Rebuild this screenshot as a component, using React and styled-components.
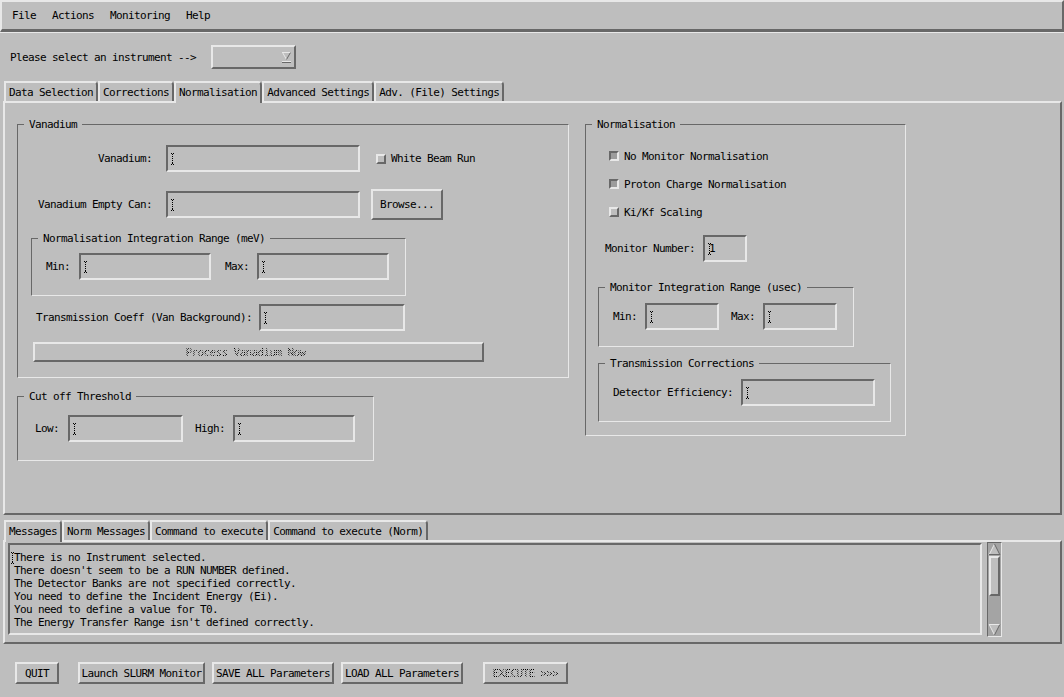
import React from 'react';
import styled, { createGlobalStyle, css } from 'styled-components';

const BG = '#bebebe';
const LIGHT = '#e8e8e8';
const DARK = '#686868';
const TROUGH = '#a4a4a4';

const raised = (w = 2) => css`
  border-style: solid;
  border-width: ${w}px;
  border-color: ${LIGHT} ${DARK} ${DARK} ${LIGHT};
`;
const sunken = (w = 2) => css`
  border-style: solid;
  border-width: ${w}px;
  border-color: ${DARK} ${LIGHT} ${LIGHT} ${DARK};
`;
const stipple = css`
  color: transparent;
  background: repeating-conic-gradient(#000 0 25%, transparent 0 50%) 0 0 / 2px 2px;
  -webkit-background-clip: text;
  background-clip: text;
`;

const GlobalStyle = createGlobalStyle`
  html, body {
    margin: 0;
    background: ${BG};
    overflow: hidden;
  }
  body {
    font-family: "DejaVu Sans Mono", "Liberation Mono", monospace;
    font-size: 11px;
    letter-spacing: -0.62px;
    line-height: 13px;
    color: #000;
  }
  * { box-sizing: border-box; }
`;

const Window = styled.div`
  width: 1064px;
  height: 697px;
  background: ${BG};
`;

const MenuBar = styled.div`
  height: 32px;
  display: flex;
  align-items: center;
  gap: 16px;
  padding-left: 10px;
  border-style: solid;
  border-width: 2px 2px 3px 2px;
  border-color: ${LIGHT} ${DARK} ${DARK} ${LIGHT};
`;

const MenuItem = styled.span`
  white-space: pre;
`;

const Body = styled.div`
  border-top: 1px solid ${LIGHT};
`;

const InstrumentRow = styled.div`
  display: flex;
  align-items: center;
  height: 24px;
  margin-top: 12px;
  padding-left: 10px;
`;

const Prompt = styled.span`
  margin-right: 15px;
  white-space: pre;
`;

const OptionMenu = styled.div`
  width: 85px;
  height: 24px;
  ${raised(2)};
  display: flex;
  align-items: center;
  justify-content: flex-end;
  padding-right: 3px;
`;

const TabStrip = styled.div`
  display: flex;
  align-items: flex-end;
  height: 20px;
  margin-top: ${p => p.$mt}px;
  padding-left: 4px;
`;

const Tab = styled.div`
  height: 20px;
  padding: 0 3px;
  display: flex;
  align-items: center;
  white-space: pre;
  border-style: solid;
  border-width: 2px 2px 0 2px;
  border-color: ${LIGHT} ${DARK} transparent ${LIGHT};
  border-top-right-radius: 4px;
  background: ${BG};
  ${p => p.$active && css`
    height: 22px;
    margin-bottom: -2px;
    padding-bottom: 2px;
    position: relative;
    z-index: 1;
  `}
`;

const TabPanel = styled.div`
  margin-left: 3px;
  width: 1059px;
  height: 414px;
  ${raised(2)};
  padding: 15px 0 0 12px;
  display: flex;
  align-items: flex-start;
  gap: 16px;
`;

const Column = styled.div`
  display: flex;
  flex-direction: column;
  align-items: flex-start;
`;

const Group = styled.fieldset`
  margin: ${p => p.$m || '0'};
  padding: 0;
  min-width: 0;
  width: ${p => p.$w}px;
  border: 1px solid;
  border-color: ${DARK} ${LIGHT} ${LIGHT} ${DARK};
  display: flex;
  flex-direction: column;
  align-items: flex-start;
`;

const Legend = styled.legend`
  margin-left: 6px;
  padding: 0 5px;
  line-height: 13px;
  white-space: pre;
`;

const FieldRow = styled.div`
  display: flex;
  align-items: center;
  margin: ${p => p.$m || '0'};
`;

const Label = styled.span`
  white-space: pre;
  text-align: ${p => (p.$w ? 'right' : 'left')};
  ${p => p.$w && css`width: ${p.$w}px;`}
  margin-left: ${p => p.$ml || 0}px;
  margin-right: ${p => p.$mr || 0}px;
`;

const Field = styled.div`
  width: ${p => p.$w}px;
  height: 27px;
  ${sunken(2)};
  display: flex;
  align-items: center;
  padding-left: 3px;
`;

const FieldValue = styled.span`
  margin-left: -2px;
`;

const CaretSvg = styled.svg`
  flex: none;
  display: block;
`;

const Caret = () => (
  <CaretSvg width="3" height="12" viewBox="0 0 3 12">
    <rect x="0" y="0" width="1" height="1" fill="#000" />
    <rect x="2" y="0" width="1" height="1" fill="#000" />
    <rect x="1" y="1" width="1" height="1" fill="#000" />
    <rect x="1" y="3" width="1" height="1" fill="#000" />
    <rect x="1" y="5" width="1" height="1" fill="#000" />
    <rect x="1" y="7" width="1" height="1" fill="#000" />
    <rect x="1" y="9" width="1" height="1" fill="#000" />
    <rect x="0" y="11" width="1" height="1" fill="#000" />
    <rect x="2" y="11" width="1" height="1" fill="#000" />
    <rect x="1" y="10" width="1" height="1" fill="#000" />
  </CaretSvg>
);

const Toggle = styled.span`
  flex: none;
  width: 10px;
  height: 10px;
  border-style: solid;
  border-width: 2px;
  border-color: ${p => (p.$on
    ? `${DARK} ${LIGHT} ${LIGHT} ${DARK}`
    : `${LIGHT} ${DARK} ${DARK} ${LIGHT}`)};
  background: ${p => (p.$on ? '#9c9c9c' : BG)};
  margin-right: 5px;
`;

const CheckRow = styled.div`
  display: flex;
  align-items: center;
  height: 14px;
  white-space: pre;
  margin: ${p => p.$m || '0'};
`;

const Button = styled.div`
  width: ${p => p.$w}px;
  height: ${p => p.$h || 22}px;
  ${raised(2)};
  display: flex;
  align-items: center;
  justify-content: center;
  white-space: pre;
  margin: ${p => p.$m || '0'};
  padding-right: ${p => p.$shift || 0}px;
`;

const Disabled = styled.span`
  ${stipple};
`;

const MessagePanel = styled.div`
  margin-left: 3px;
  width: 1059px;
  height: 104px;
  ${raised(2)};
  display: flex;
  align-items: flex-start;
  padding: 1px 0 0 3px;
`;

const MessageText = styled.div`
  position: relative;
  width: 974px;
  height: 92px;
  ${sunken(2)};
  padding: 6px 0 0 4px;
  white-space: pre;
  line-height: 13px;
  overflow: hidden;
`;

const TextCaret = styled.span`
  position: absolute;
  left: 1px;
  top: 7px;
`;

const ScrollBar = styled.div`
  margin: -1px 0 0 5px;
  width: 15px;
  height: 95px;
  ${sunken(1)};
  background: ${TROUGH};
  display: flex;
  flex-direction: column;
`;

const Thumb = styled.div`
  margin-left: 1px;
  width: 11px;
  height: 40px;
  ${raised(2)};
  background: ${BG};
`;

const Trough = styled.div`
  flex: 1;
`;

const ArrowSvg = styled.svg`
  display: block;
  flex: none;
`;

const ScrollArrow = ({ down }) => (
  <ArrowSvg width="13" height="13" viewBox="0 0 13 13">
    {down ? (
      <>
        <polygon points="1,1 12,1 6.5,12" fill={BG} />
        <line x1="1" y1="1.5" x2="12" y2="1.5" stroke={LIGHT} />
        <line x1="1.2" y1="1.5" x2="6.5" y2="12" stroke={LIGHT} />
        <line x1="11.8" y1="1.5" x2="6.5" y2="12" stroke={DARK} />
      </>
    ) : (
      <>
        <polygon points="6.5,1 12,12 1,12" fill={BG} />
        <line x1="6.5" y1="1" x2="1" y2="12" stroke={LIGHT} />
        <line x1="6.5" y1="1" x2="12" y2="12" stroke={DARK} />
        <line x1="1" y1="11.5" x2="12" y2="11.5" stroke={DARK} />
      </>
    )}
  </ArrowSvg>
);

const OptionArrow = () => (
  <ArrowSvg width="9" height="11" viewBox="0 0 9 11">
    <polygon points="0.5,0.5 8.5,0.5 4.5,7.5" fill={BG} />
    <line x1="0" y1="0.5" x2="9" y2="0.5" stroke={LIGHT} />
    <line x1="0.5" y1="0.5" x2="4.5" y2="7.5" stroke={LIGHT} />
    <line x1="8.5" y1="0.5" x2="4.5" y2="7.5" stroke={DARK} />
    <line x1="0" y1="9.5" x2="9" y2="9.5" stroke={LIGHT} />
    <line x1="0" y1="10.5" x2="9" y2="10.5" stroke={DARK} />
  </ArrowSvg>
);

const ButtonRow = styled.div`
  display: flex;
  align-items: center;
  margin-top: 18px;
  padding-left: 15px;
`;

const TextBox = ({ w, value }) => (
  <Field $w={w}>
    <Caret />
    {value && <FieldValue>{value}</FieldValue>}
  </Field>
);

const messages = [
  'There is no Instrument selected.',
  "There doesn't seem to be a RUN NUMBER defined.",
  'The Detector Banks are not specified correctly.',
  'You need to define the Incident Energy (Ei).',
  'You need to define a value for T0.',
  "The Energy Transfer Range isn't defined correctly.",
];

export default function App() {
  return (
    <Window>
      <GlobalStyle />
      <MenuBar>
        <MenuItem>File</MenuItem>
        <MenuItem>Actions</MenuItem>
        <MenuItem>Monitoring</MenuItem>
        <MenuItem>Help</MenuItem>
      </MenuBar>
      <Body>
        <InstrumentRow>
          <Prompt>Please select an instrument --&gt;</Prompt>
          <OptionMenu>
            <OptionArrow />
          </OptionMenu>
        </InstrumentRow>

        <TabStrip $mt={12}>
          <Tab>Data Selection</Tab>
          <Tab>Corrections</Tab>
          <Tab $active>Normalisation</Tab>
          <Tab>Advanced Settings</Tab>
          <Tab>Adv. (File) Settings</Tab>
        </TabStrip>

        <TabPanel>
          <Column>
            <Group $w={552}>
              <Legend>Vanadium</Legend>
              <FieldRow $m="14px 0 0 0">
                <Label $w={134} $mr={14}>Vanadium:</Label>
                <TextBox w={194} />
                <CheckRow $m="0 0 0 16px">
                  <Toggle />
                  White Beam Run
                </CheckRow>
              </FieldRow>
              <FieldRow $m="17px 0 0 0">
                <Label $w={134} $mr={14}>Vanadium Empty Can:</Label>
                <TextBox w={194} />
                <Button $w={72} $h={31} $m="0 0 0 11px">Browse...</Button>
              </FieldRow>
              <Group $w={375} $m="12px 0 0 13px">
                <Legend>Normalisation Integration Range (meV)</Legend>
                <FieldRow $m="8px 0 15px 14px">
                  <Label $mr={9}>Min:</Label>
                  <TextBox w={132} />
                  <Label $ml={14} $mr={8}>Max:</Label>
                  <TextBox w={132} />
                </FieldRow>
              </Group>
              <FieldRow $m="8px 0 0 18px">
                <Label $mr={7}>Transmission Coeff (Van Background):</Label>
                <TextBox w={146} />
              </FieldRow>
              <Button $w={451} $h={20} $m="11px 0 15px 15px" $shift={26}>
                <Disabled>Process Vanadium Now</Disabled>
              </Button>
            </Group>

            <Group $w={357} $m="12px 0 0 0">
              <Legend>Cut off Threshold</Legend>
              <FieldRow $m="12px 0 18px 17px">
                <Label $mr={9}>Low:</Label>
                <TextBox w={115} />
                <Label $ml={12} $mr={8}>High:</Label>
                <TextBox w={122} />
              </FieldRow>
            </Group>
          </Column>

          <Column>
            <Group $w={321}>
              <Legend>Normalisation</Legend>
              <CheckRow $m="18px 0 0 23px">
                <Toggle $on />
                No Monitor Normalisation
              </CheckRow>
              <CheckRow $m="14px 0 0 23px">
                <Toggle $on />
                Proton Charge Normalisation
              </CheckRow>
              <CheckRow $m="14px 0 0 23px">
                <Toggle />
                Ki/Kf Scaling
              </CheckRow>
              <FieldRow $m="16px 0 0 19px">
                <Label $mr={8}>Monitor Number:</Label>
                <TextBox w={44} value="1" />
              </FieldRow>
              <Group $w={256} $m="19px 0 0 12px">
                <Legend>Monitor Integration Range (usec)</Legend>
                <FieldRow $m="9px 0 16px 14px">
                  <Label $mr={8}>Min:</Label>
                  <TextBox w={74} />
                  <Label $ml={12} $mr={8}>Max:</Label>
                  <TextBox w={74} />
                </FieldRow>
              </Group>
              <Group $w={293} $m="10px 0 13px 12px">
                <Legend>Transmission Corrections</Legend>
                <FieldRow $m="9px 0 15px 14px">
                  <Label $mr={8}>Detector Efficiency:</Label>
                  <TextBox w={134} />
                </FieldRow>
              </Group>
            </Group>
          </Column>
        </TabPanel>

        <TabStrip $mt={5}>
          <Tab $active>Messages</Tab>
          <Tab>Norm Messages</Tab>
          <Tab>Command to execute</Tab>
          <Tab>Command to execute (Norm)</Tab>
        </TabStrip>

        <MessagePanel>
          <MessageText>
            <TextCaret>
              <Caret />
            </TextCaret>
            {messages.join('\n')}
          </MessageText>
          <ScrollBar>
            <ScrollArrow />
            <Thumb />
            <Trough />
            <ScrollArrow down />
          </ScrollBar>
        </MessagePanel>

        <ButtonRow>
          <Button $w={44}>QUIT</Button>
          <Button $w={127} $m="0 0 0 19px">Launch SLURM Monitor</Button>
          <Button $w={122} $m="0 0 0 7px">SAVE ALL Parameters</Button>
          <Button $w={122} $m="0 0 0 7px">LOAD ALL Parameters</Button>
          <Button $w={85} $m="0 0 0 20px">
            <Disabled>EXECUTE &gt;&gt;&gt;</Disabled>
          </Button>
        </ButtonRow>
      </Body>
    </Window>
  );
}
